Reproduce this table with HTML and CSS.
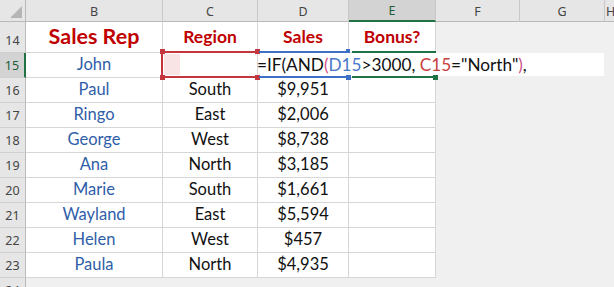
FILE: index.html
```html
<!DOCTYPE html>
<html>
<head>
<meta charset="utf-8">
<link rel="stylesheet" href="styles.css">
</head>
<body>
<div class="sheet">
  <div class="grid">
    <div class="hd corner"><svg width="25" height="21" viewBox="0 0 25 21"><polygon points="10,18 22,18 22,6" fill="#b5b5b5"/></svg></div>
    <div class="hd col">B</div>
    <div class="hd col">C</div>
    <div class="hd col">D</div>
    <div class="hd col sel-col">E</div>
    <div class="hd col">F</div>
    <div class="hd col">G</div>
    <div class="hd col last">H</div>

    <div class="hd row">14</div>
    <div class="c title big">Sales Rep</div>
    <div class="c title">Region</div>
    <div class="c title">Sales</div>
    <div class="c title">Bonus?</div>
    <div class="o"></div><div class="o"></div><div class="o"></div>

    <div class="hd row sel-row">15</div>
    <div class="c name">John</div>
    <div class="c"></div>
    <div class="c"></div>
    <div class="c"></div>
    <div class="o"></div><div class="o"></div><div class="o"></div>

    <div class="hd row">16</div>
    <div class="c name">Paul</div><div class="c">South</div><div class="c">$9,951</div><div class="c"></div>
    <div class="o"></div><div class="o"></div><div class="o"></div>

    <div class="hd row">17</div>
    <div class="c name">Ringo</div><div class="c">East</div><div class="c">$2,006</div><div class="c"></div>
    <div class="o"></div><div class="o"></div><div class="o"></div>

    <div class="hd row">18</div>
    <div class="c name">George</div><div class="c">West</div><div class="c">$8,738</div><div class="c"></div>
    <div class="o"></div><div class="o"></div><div class="o"></div>

    <div class="hd row">19</div>
    <div class="c name">Ana</div><div class="c">North</div><div class="c">$3,185</div><div class="c"></div>
    <div class="o"></div><div class="o"></div><div class="o"></div>

    <div class="hd row">20</div>
    <div class="c name">Marie</div><div class="c">South</div><div class="c">$1,661</div><div class="c"></div>
    <div class="o"></div><div class="o"></div><div class="o"></div>

    <div class="hd row">21</div>
    <div class="c name">Wayland</div><div class="c">East</div><div class="c">$5,594</div><div class="c"></div>
    <div class="o"></div><div class="o"></div><div class="o"></div>

    <div class="hd row">22</div>
    <div class="c name">Helen</div><div class="c">West</div><div class="c">$457</div><div class="c"></div>
    <div class="o"></div><div class="o"></div><div class="o"></div>

    <div class="hd row">23</div>
    <div class="c name">Paula</div><div class="c">North</div><div class="c">$4,935</div><div class="c"></div>
    <div class="o"></div><div class="o"></div><div class="o"></div>

    <div class="hd row r24">24</div>
  </div>

  <div class="edit"><span>=IF(AND</span><span class="pk">(</span><span class="bl">D15</span><span>&gt;3000, </span><span class="rd">C15</span><span>="North"</span><span class="pk">)</span><span>,</span></div>

  <div class="ref-fill"></div>
  <div class="ln red-top"></div>
  <div class="ln red-bot"></div>
  <div class="ln red-left"></div>
  <div class="hdl red h1"></div>
  <div class="hdl red h2"></div>
  <div class="hdl red h3"></div>
  <div class="hdl red h4"></div>
  <div class="ln blue-top"></div>
  <div class="ln blue-bot"></div>
  <div class="hdl blue h5"></div>
  <div class="hdl blue h6"></div>
  <div class="ln green-top"></div>
  <div class="ln green-bot"></div>
  <div class="hdl green h7"></div>
</div>
</body>
</html>
```

FILE: styles.css
```css
html, body {
  margin: 0;
  padding: 0;
  background: #f0f0f0;
  overflow: hidden;
}
.sheet {
  position: relative;
  width: 614px;
  height: 287px;
  overflow: hidden;
}
.grid {
  display: grid;
  grid-template-columns: 26px 137px 95px 91px 87px 84px 85px 9px;
  grid-template-rows: 22px 31px 25px repeat(8, 25px) 25px;
}
.hd {
  box-sizing: border-box;
  background: #e6e6e6;
  color: #444;
  font-family: "Noto Sans", sans-serif;
  font-size: 12.5px;
  display: flex;
  align-items: center;
  justify-content: center;
}
.col {
  border-right: 1px solid #c9c9c9;
  border-bottom: 1px solid #b9b9b9;
  padding-top: 1px;
}
.col.last {
  border-right: none;
  justify-content: flex-start;
  padding-left: 1px;
}
.corner {
  border-right: 1px solid #b9b9b9;
  border-bottom: 1px solid #b9b9b9;
  display: block;
}
.corner svg { display: block; }
.row {
  border-right: 1px solid #b9b9b9;
  border-bottom: 1px solid #d0d0d0;
  align-items: flex-end;
  padding-bottom: 3px;
}
.r24 {
  grid-column: 1;
  align-items: flex-start;
  padding-top: 4px;
}
.sel-col {
  background: #d3d3d3;
  color: #1e5c3a;
  border-bottom: 2px solid #217346;
}
.sel-row {
  background: #d3d3d3;
  color: #1e5c3a;
  border-right: 2px solid #217346;
}
.c {
  box-sizing: border-box;
  background: #fff;
  border-right: 1px solid #d6d6d6;
  border-bottom: 1px solid #d6d6d6;
  font-family: Lato, "Open Sans", sans-serif;
  font-size: 16.5px;
  color: #111;
  display: flex;
  align-items: flex-end;
  justify-content: center;
  padding-bottom: 3px;
  white-space: nowrap;
}
.title {
  color: #c00000;
  font-weight: bold;
  font-size: 17.5px;
  padding-bottom: 5px;
}
.title.big {
  font-size: 21.5px;
  padding-bottom: 3px;
}
.name {
  color: #2f5ea8;
}
.o {
  background: transparent;
}
.edit {
  position: absolute;
  left: 258px;
  top: 53px;
  width: 346px;
  height: 23px;
  padding-top: 1px;
  box-sizing: border-box;
  background: #fff;
  font-family: Lato, "Open Sans", sans-serif;
  font-size: 17.2px;
  line-height: 22px;
  color: #111;
  white-space: nowrap;
  text-indent: -1px;
}
.pk { color: #d0508a; }
.bl { color: #4a78c8; }
.rd { color: #c8403f; }
.ref-fill {
  position: absolute;
  left: 164px;
  top: 54px;
  width: 16px;
  height: 21px;
  background: #f8e4e5;
}
.ln { position: absolute; }
.red-top, .red-bot {
  left: 161px;
  width: 97px;
  height: 2px;
  background: #c4363e;
}
.red-top { top: 51px; }
.red-bot { top: 76px; }
.red-left {
  left: 161px;
  top: 51px;
  width: 2px;
  height: 27px;
  background: #c4363e;
}
.hdl {
  position: absolute;
  width: 5px;
  height: 5px;
}
.hdl.red { background: #c4363e; }
.hdl.blue { background: #3d6fc4; }
.hdl.green { background: #217346; }
.h1 { left: 160px; top: 49px; }
.h2 { left: 255px; top: 49px; }
.h3 { left: 160px; top: 75px; }
.h4 { left: 255px; top: 75px; }
.blue-top, .blue-bot {
  left: 259px;
  width: 88px;
  height: 2px;
  background: #3d6fc4;
}
.blue-top { top: 51px; }
.blue-bot { top: 76px; }
.h5 { left: 346px; top: 49px; width: 4px; height: 4px; }
.h6 { left: 346px; top: 75px; }
.green-top, .green-bot {
  left: 352px;
  height: 2px;
  background: #217346;
}
.green-top { top: 51px; width: 84px; }
.green-bot { top: 76px; width: 82px; }
.h7 { left: 433px; top: 75px; }
```
